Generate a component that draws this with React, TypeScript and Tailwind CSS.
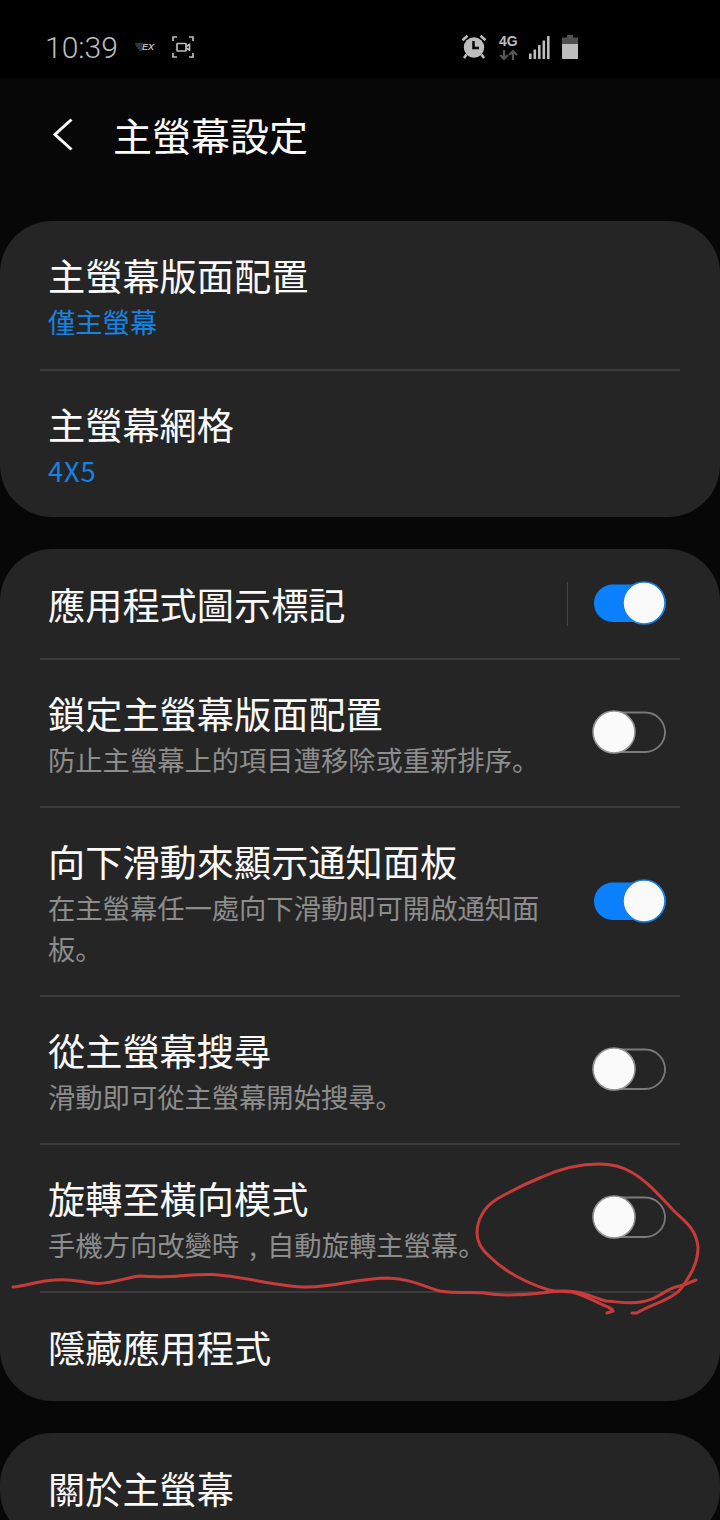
import clsx from "clsx";

type Setting = {
  title: string;
  subtitle?: string;
  value?: string;
  valueClass?: string;
  enabled?: boolean;
  separator?: boolean;
  height: string;
};

const layoutSettings: Setting[] = [
  { title: "主螢幕版面配置", value: "僅主螢幕", height: "h-[150px]" },
  { title: "主螢幕網格", value: "4X5", valueClass: "tracking-[0.8px]", height: "h-[146px]" },
];

const behaviourSettings: Setting[] = [
  { title: "應用程式圖示標記", enabled: true, separator: true, height: "h-[111px]" },
  {
    title: "鎖定主螢幕版面配置",
    subtitle: "防止主螢幕上的項目遭移除或重新排序。",
    enabled: false,
    height: "h-[148px]",
  },
  {
    title: "向下滑動來顯示通知面板",
    subtitle: "在主螢幕任一處向下滑動即可開啟通知面板。",
    enabled: true,
    height: "h-[189px]",
  },
  {
    title: "從主螢幕搜尋",
    subtitle: "滑動即可從主螢幕開始搜尋。",
    enabled: false,
    height: "h-[148px]",
  },
  {
    title: "旋轉至橫向模式",
    subtitle: "手機方向改變時，自動旋轉主螢幕。",
    enabled: false,
    height: "h-[148px]",
  },
  { title: "隱藏應用程式", height: "h-[108px]" },
];

function Toggle({ on }: { on: boolean }) {
  return (
    <svg width="76" height="46" viewBox="0 0 76 46" className="shrink-0">
      {on ? (
        <>
          <rect x="3" y="3.5" width="72" height="37.5" rx="18.75" fill="#0a80fd" />
          <circle cx="53" cy="22" r="21" fill="#fafafa" stroke="#1a7fe0" strokeWidth="1.6" />
        </>
      ) : (
        <>
          <rect x="3" y="2.5" width="71" height="39.5" rx="19.75" fill="none" stroke="#7b7b7b" strokeWidth="1.8" />
          <circle cx="23" cy="22" r="21" fill="#fafafa" stroke="#939393" strokeWidth="1.6" />
        </>
      )}
    </svg>
  );
}

function SettingRow({ item, last }: { item: Setting; last: boolean }) {
  return (
    <div
      className={clsx(
        "mx-10 flex items-center pl-2",
        item.height,
        !last && "border-b-2 border-[#3b3b3b]"
      )}
    >
      <div className="w-[501px] shrink-0">
        <div className="text-[37.2px] leading-[52px] text-[#fafafa]">{item.title}</div>
        {item.value && (
          <div className={clsx("text-[27.3px] leading-[41px] text-[#1683e2]", item.valueClass)}>
            {item.value}
          </div>
        )}
        {item.subtitle && (
          <div className="text-[27.3px] leading-[41px] text-[#8d8d8d]">
            {item.subtitle.split("，").map((part, i) => (
              <span key={i}>
                {/* The comma sits in the middle of its full-width cell */}
                {i > 0 && <span className="inline-block w-[28px] text-center">,</span>}
                {part}
              </span>
            ))}
          </div>
        )}
      </div>
      {item.enabled !== undefined && (
        <div className="flex items-center">
          <div className={clsx("mr-[23px] ml-[18px] h-11 w-px", item.separator && "bg-[#454545]")} />
          <Toggle on={item.enabled} />
        </div>
      )}
    </div>
  );
}

function Card({ items }: { items: Setting[] }) {
  return (
    <section className="rounded-[52px] bg-[#252525]">
      {items.map((item, i) => (
        <SettingRow key={item.title} item={item} last={i === items.length - 1} />
      ))}
    </section>
  );
}

function StatusBar() {
  return (
    <div className="flex h-[78px] items-start bg-black text-[#bdbdbd]">
      <div className="mt-[28px] ml-[45px] w-[90px] font-['Roboto'] text-[30px] leading-10 font-light">
        10:39
      </div>
      {/* Carrier badge */}
      <div className="mt-[41px] flex h-3 w-[20px] items-center">
        <svg width="8" height="8" viewBox="0 0 8 8" fill="none" stroke="#666" strokeWidth="1">
          <path d="M0 1h8M1 3h6M2.5 5h5M4 7h3" />
        </svg>
        <span className="-ml-px font-['Liberation_Sans'] text-[9px] leading-3 font-bold italic">EX</span>
      </div>
      {/* Screen recorder */}
      <svg className="mt-[36px] ml-[17px]" width="22" height="22" viewBox="0 0 22 22" fill="none" stroke="#bdbdbd" strokeWidth="1.7">
        <path d="M1 5V1H5M17 1H21V5M21 17V21H17M5 21H1V17" />
        <rect x="5" y="7.5" width="9" height="7.5" rx="0.6" />
        <path d="M14 10.5l3.5-2v5.5l-3.5-2" />
      </svg>

      {/* Alarm */}
      <svg className="mt-[34px] ml-[267px]" width="26" height="26" viewBox="0 0 26 26" fill="#bdbdbd" stroke="#bdbdbd">
        <path d="M1.5 6.2L6.5 1.8M24.5 6.2L19.5 1.8" strokeWidth="2.6" fill="none" />
        <path d="M5.5 20.5L3 24M20.5 20.5L23 24" strokeWidth="2.6" fill="none" />
        <circle cx="13" cy="13.5" r="10.2" stroke="none" />
        <path d="M12.5 7V14H18" stroke="#000" strokeWidth="2.5" fill="none" />
      </svg>
      {/* Network */}
      <div className="mt-[34px] ml-[12px] w-[20px]">
        <div className="font-['Liberation_Sans'] text-[14px] leading-[14px] font-bold">4G</div>
        <svg className="mt-px" width="19" height="12" viewBox="0 0 19 12" fill="none" stroke="#555" strokeWidth="2.2">
          <path d="M5 1V10M1.2 6L5 10L8.8 6M14 11V2M10.2 6L14 2L17.8 6" />
        </svg>
      </div>
      {/* Signal */}
      <svg className="mt-[36px] ml-[10px]" width="21" height="23" viewBox="0 0 21 23" fill="#bdbdbd">
        <rect x="0" y="17.5" width="2.6" height="5.5" rx="0.5" />
        <rect x="4.5" y="13.5" width="2.6" height="9.5" rx="0.5" />
        <rect x="9" y="9" width="2.6" height="14" rx="0.5" />
        <rect x="13.5" y="4.5" width="2.6" height="18.5" rx="0.5" />
        <rect x="18" y="0" width="2.6" height="23" rx="0.5" />
      </svg>
      {/* Battery */}
      <svg className="mt-[34px] ml-[12px]" width="17" height="25" viewBox="0 0 17 25">
        <path d="M5 1H11V3.5H16V11H0V3.5H5Z" fill="#4f4f4f" />
        <path d="M0 10H16V24Q16 25 15 25H1Q0 25 0 24Z" fill="#bdbdbd" />
      </svg>
    </div>
  );
}

export default function App() {
  return (
    <div className="relative h-[1520px] w-[720px] overflow-hidden bg-[#070707] font-['Noto_Sans_CJK_JP',sans-serif]">
      <StatusBar />

      <header className="flex h-[143px] items-start">
        <svg className="mt-[40px] ml-[53px]" width="20" height="33" viewBox="0 0 20 33" fill="none" stroke="#fafafa" strokeWidth="3">
          <path d="M18.5 1.5L2 16.5L18.5 31.5" />
        </svg>
        <h1 className="mt-[28px] ml-[40px] text-[39px] leading-[56px] text-[#fafafa]">主螢幕設定</h1>
      </header>

      <main className="flex flex-col gap-8">
        <Card items={layoutSettings} />
        <Card items={behaviourSettings} />
        <Card items={[{ title: "關於主螢幕", height: "h-[109px]" }]} />
      </main>

      {/* Pen strokes */}
      <svg
        className="pointer-events-none absolute top-[1150px] left-0"
        width="720"
        height="180"
        viewBox="0 0 720 180"
        fill="none"
        stroke="#c73c3b"
        strokeWidth="3"
        strokeLinecap="round"
        strokeLinejoin="round"
      >
        <path d="M13 137C25 136 38 131 54 130C75 128 82 133 98 133.500C115 133 128 127 140 126C150 127 158 127 170 126.500C185 126 195 124 212 124.500C245 126 275 137 308 137C335 137 360 128 388 128C412 129 425 137 440 141C455 143.500 470 142 484 143C505 147 530 144 550 142C580 138 590 147 606 151C620 152 630 154 641 152C662 149 662 139 680 136C688 134 690 132 696 130" />
        <path d="M607 163L613 161Q612 158 603 155C591 149 581 144 572 142C564 141 556 142 549 140C523 132 504 121 489 106C481 99 477 92 477 83C477 70 484 57 497 49C511 41 527 33 542 27C562 18 581 14 599 14C612 14 621 16 631 22C646 30 660 46 673 60C684 71 696 78 698 97C698 113 691 124 683 136C674 150 650 154 637 163L632 163" />
      </svg>
    </div>
  );
}
